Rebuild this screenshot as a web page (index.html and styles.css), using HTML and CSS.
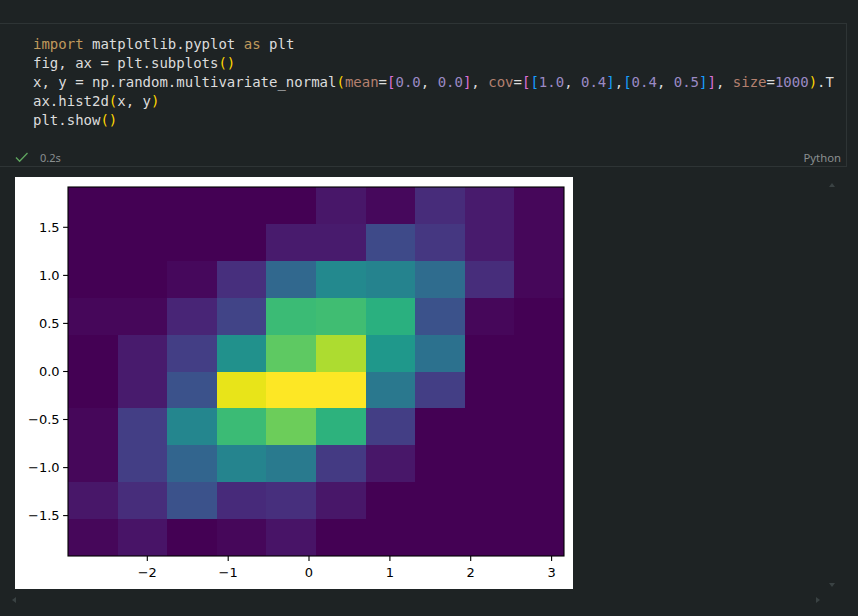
FILE: index.html
```html
<!DOCTYPE html>
<html>
<head>
<meta charset="utf-8">
<link rel="stylesheet" href="styles.css">
</head>
<body>
<div class="notebook">
  <div class="cell">
    <pre class="code"><span class="kw">import</span> matplotlib.pyplot <span class="kw">as</span> plt
fig, ax = plt.subplots<span class="b1">()</span>
x, y = np.random.multivariate_normal<span class="b1">(</span><span class="pm">mean</span>=<span class="b2">[</span><span class="nu">0.0</span>, <span class="nu">0.0</span><span class="b2">]</span>, <span class="pm">cov</span>=<span class="b2">[</span><span class="b3">[</span><span class="nu">1.0</span>, <span class="nu">0.4</span><span class="b3">]</span>,<span class="b3">[</span><span class="nu">0.4</span>, <span class="nu">0.5</span><span class="b3">]</span><span class="b2">]</span>, <span class="pm">size</span>=<span class="nu">1000</span><span class="b1">)</span>.T
ax.hist2d<span class="b1">(</span>x, y<span class="b1">)</span>
plt.show<span class="b1">()</span></pre>
    <div class="status">
      <svg class="check" width="14" height="12" viewBox="0 0 14 12"><path d="M1 6.5 L4.6 10.2 L12.5 2" fill="none" stroke="#5fa55f" stroke-width="1.3"/></svg>
      <span class="time">0.2s</span>
      <span class="lang">Python</span>
    </div>
  </div>
  <div class="output">
    <div class="figure">
      <svg width="558" height="412" viewBox="0 0 558 412">
        <g shape-rendering="crispEdges" id="cells"></g>
        <g class="ticks" stroke="#000" stroke-width="1.1">
          <line x1="48.1" y1="50.3" x2="53" y2="50.3"/>
          <line x1="48.1" y1="98.4" x2="53" y2="98.4"/>
          <line x1="48.1" y1="146.4" x2="53" y2="146.4"/>
          <line x1="48.1" y1="194.5" x2="53" y2="194.5"/>
          <line x1="48.1" y1="242.5" x2="53" y2="242.5"/>
          <line x1="48.1" y1="290.6" x2="53" y2="290.6"/>
          <line x1="48.1" y1="338.6" x2="53" y2="338.6"/>
          <line x1="132.3" y1="379" x2="132.3" y2="383.9"/>
          <line x1="213.2" y1="379" x2="213.2" y2="383.9"/>
          <line x1="294" y1="379" x2="294" y2="383.9"/>
          <line x1="374.9" y1="379" x2="374.9" y2="383.9"/>
          <line x1="455.7" y1="379" x2="455.7" y2="383.9"/>
          <line x1="536.6" y1="379" x2="536.6" y2="383.9"/>
        </g>
        <g class="ylabels" text-anchor="end">
          <text x="44.6" y="55.1">1.5</text>
          <text x="44.6" y="103.2">1.0</text>
          <text x="44.6" y="151.2">0.5</text>
          <text x="44.6" y="199.3">0.0</text>
          <text x="44.6" y="247.3">−0.5</text>
          <text x="44.6" y="295.4">−1.0</text>
          <text x="44.6" y="343.4">−1.5</text>
        </g>
        <g class="xlabels" text-anchor="middle">
          <text x="132.3" y="400">−2</text>
          <text x="213.2" y="400">−1</text>
          <text x="294" y="400">0</text>
          <text x="374.9" y="400">1</text>
          <text x="455.7" y="400">2</text>
          <text x="536.6" y="400">3</text>
        </g>
        <rect x="53" y="10" width="496" height="369" fill="none" stroke="#000" stroke-width="1.1"/>
      </svg>
    </div>
  </div>
</div>
<div class="arrow up"></div>
<div class="arrow down"></div>
<div class="arrow left"></div>
<div class="arrow right"></div>
<script src="plot.js"></script>
</body>
</html>
```
FILE: styles.css
```css
html, body {
  margin: 0;
  padding: 0;
  background: #1e2324;
  width: 858px;
  height: 616px;
  overflow: hidden;
}
.notebook {
  padding-top: 23px;
}
.cell {
  margin-left: -1px;
  width: 848px;
  border: 1px solid #2e3435;
  box-sizing: border-box;
}
.code {
  margin: 0;
  padding: 11px 0 0 33px;
  font-family: "DejaVu Sans Mono", monospace;
  font-size: 14px;
  line-height: 19px;
  color: #dcdcdc;
  white-space: pre;
  overflow: hidden;
}
.kw { color: #c09a5c; }
.b1 { color: #ffd700; }
.b2 { color: #da70d6; }
.b3 { color: #179fff; }
.pm { color: #b4806f; }
.nu { color: #9b8ac4; }
.status {
  display: flex;
  align-items: center;
  height: 18px;
  margin-top: 18px;
  padding-left: 15px;
  padding-right: 5px;
  font-family: "Noto Sans", sans-serif;
  font-size: 11px;
  color: #8a8f90;
}
.check {
  display: block;
  margin-right: 11px;
}
.time { flex: 1; }
.lang { font-size: 11.3px; }
.output {
  padding: 10px 0 0 15px;
}
.figure {
  width: 558px;
  height: 412px;
  background: #fff;
}
.figure svg {
  display: block;
  font-family: "DejaVu Sans", sans-serif;
  font-size: 13px;
  fill: #000;
}
.arrow {
  position: absolute;
  width: 0;
  height: 0;
}
.up {
  left: 829px;
  top: 183px;
  border-left: 3.5px solid transparent;
  border-right: 3.5px solid transparent;
  border-bottom: 4px solid #3a4243;
}
.down {
  left: 829px;
  top: 583px;
  border-left: 3.5px solid transparent;
  border-right: 3.5px solid transparent;
  border-top: 4px solid #3a4243;
}
.left {
  left: 12px;
  top: 597px;
  border-top: 3.5px solid transparent;
  border-bottom: 3.5px solid transparent;
  border-right: 4px solid #3a4243;
}
.right {
  left: 816px;
  top: 597px;
  border-top: 3.5px solid transparent;
  border-bottom: 3.5px solid transparent;
  border-left: 4px solid #3a4243;
}
```
FILE: plot.js
```js
(function () {
  var d = '#440154';
  var rows = [
    [d, d, d, d, d, '#481769', '#46085c', '#472c7a', '#481b6d', '#46075a'],
    [d, d, d, d, '#481b6d', '#481b6d', '#3e4a89', '#453781', '#481b6d', '#46075a'],
    [d, d, '#46085c', '#472f7d', '#31688e', '#23898e', '#25838e', '#2f6c8e', '#472d7b', '#46075a'],
    ['#46075a', '#46075a', '#482576', '#414487', '#3bbb75', '#40bd72', '#2ab07f', '#3b528b', '#46075a', d],
    [d, '#481b6d', '#433e85', '#21918c', '#5ec962', '#addc30', '#1f988b', '#2c718e', d, d],
    [d, '#481b6d', '#3b528b', '#e8e419', '#fde725', '#fde725', '#2a788e', '#433e85', d, d],
    ['#46075a', '#433e85', '#24868e', '#3bbb75', '#6ccd5a', '#2db27d', '#433e85', d, d, d],
    ['#46075a', '#433e85', '#32658e', '#25848e', '#297a8e', '#443a83', '#481769', d, d, d],
    ['#481769', '#472d7b', '#3b528b', '#472a7a', '#472f7d', '#481769', d, d, d, d],
    ['#46075a', '#481467', d, '#46075a', '#481467', d, d, d, d, d]
  ];
  var g = document.getElementById('cells');
  var ns = 'http://www.w3.org/2000/svg';
  var x0 = 53, y0 = 10, w = 49.6, h = 36.9;
  for (var r = 0; r < 10; r++) {
    for (var c = 0; c < 10; c++) {
      var rect = document.createElementNS(ns, 'rect');
      var xa = Math.round(x0 + c * w), xb = Math.round(x0 + (c + 1) * w);
      var ya = Math.round(y0 + r * h), yb = Math.round(y0 + (r + 1) * h);
      rect.setAttribute('x', xa);
      rect.setAttribute('y', ya);
      rect.setAttribute('width', xb - xa);
      rect.setAttribute('height', yb - ya);
      rect.setAttribute('fill', rows[r][c]);
      g.appendChild(rect);
    }
  }
})();
```
